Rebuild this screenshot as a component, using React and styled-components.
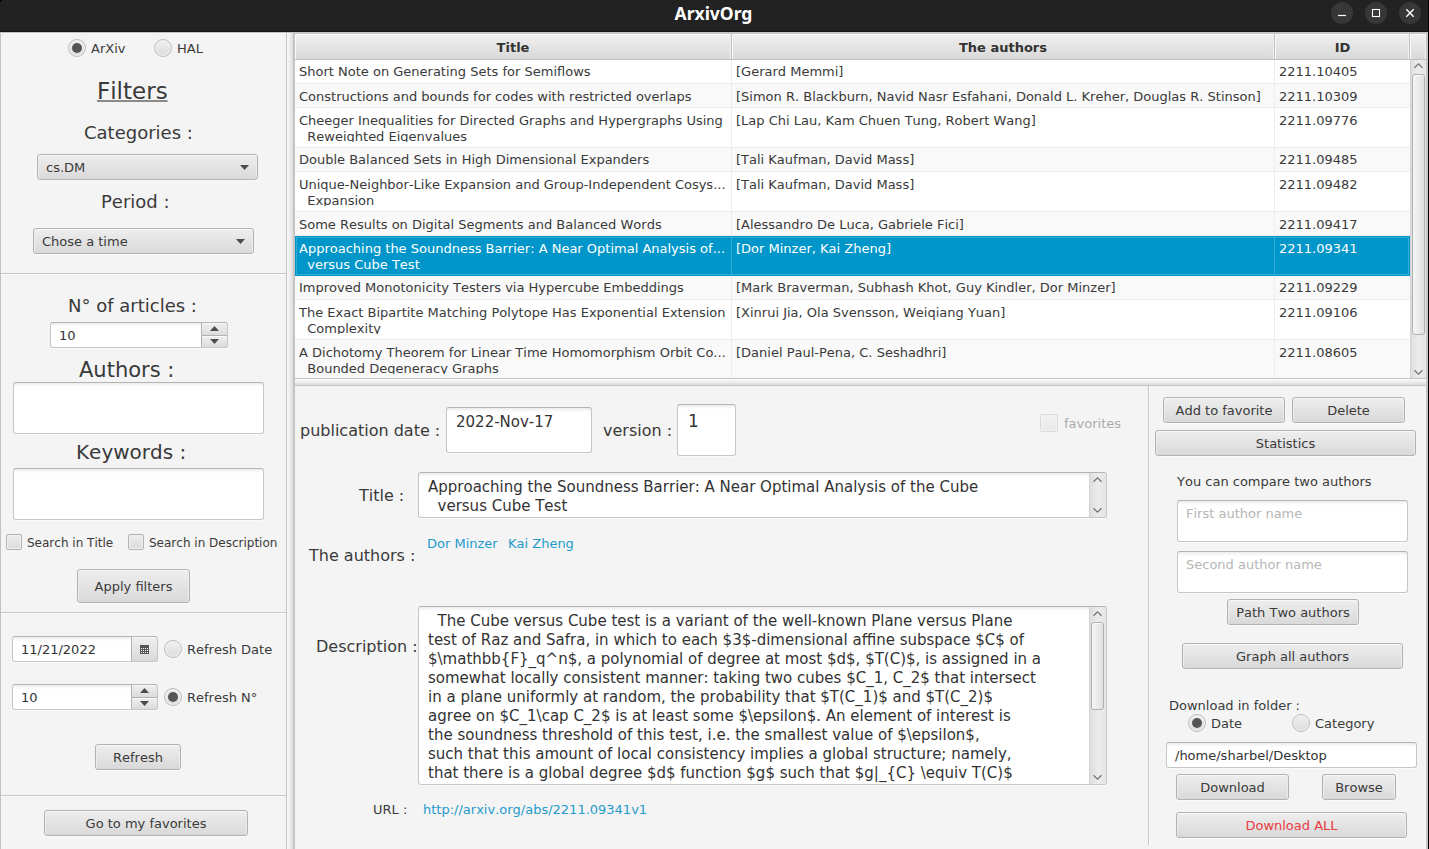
import React from "react";
import styled, { createGlobalStyle, css } from "styled-components";

const Global = createGlobalStyle`
  * { box-sizing: border-box; }
  html, body { margin: 0; padding: 0; background: #f4f4f4; }
  body {
    width: 1429px; height: 849px; overflow: hidden;
    font-family: "DejaVu Sans", sans-serif; font-size: 13px; line-height: 15px; color: #3a3a3a;
    font-kerning: none;
    white-space: pre;
  }
`;

const place = css`
  margin-top: ${(p) => p.$mt || 0}px;
  margin-left: ${(p) => p.$ml || 0}px;
  flex: none;
`;

/* ---------- window frame ---------- */
const Window = styled.div`
  width: 1429px; height: 849px;
  display: flex; flex-direction: column;
  background: #000;
`;
const TitleBar = styled.header`
  height: 32px; flex: none;
  display: flex; align-items: flex-start;
  background: #222;
  border-bottom: 1px solid #161616;
  border-right: 1px solid #000;
  border-top-left-radius: 4px;
`;
const WindowTitle = styled.h1`
  margin: 0 0 0 96px; flex: 1;
  text-align: center;
  font: bold 17.5px/27px "Noto Sans", sans-serif;
  color: #fff;
`;
const WindowButtons = styled.div`
  display: flex; gap: 12px; padding: 2px 7px 0 0;
`;
const RoundButton = styled.div`
  width: 22px; height: 22px; border-radius: 50%;
  background: #373737;
  svg { display: block; }
`;
const Body = styled.main`
  flex: 1; min-height: 0; display: flex;
  border-right: 1px solid #000;
  background: #f4f4f4;
`;

/* ---------- panels ---------- */
const FilterPanel = styled.aside`
  width: 287px; flex: none;
  display: flex; flex-direction: column;
  border: 1px solid #c2c2c2; border-bottom: 0;
`;
const Section = styled.section`
  height: ${(p) => p.$h}px; flex: none;
  display: flex; flex-direction: column; align-items: flex-start;
  border-top: ${(p) => (p.$first ? 0 : "1px solid #c8c8c8")};
  box-shadow: ${(p) => (p.$first ? "none" : "inset 0 1px 0 #fcfcfc")};
`;
const VerticalDivider = styled.div`
  width: 6px; flex: none;
  border-top: 1px solid #c2c2c2;
  background: linear-gradient(to right, #fbfbfb, #ececec 50%, #dcdcdc);
`;
const Content = styled.div`
  width: 1135px; flex: none;
  display: flex; flex-direction: column;
  border: 2px solid #c5c5c5; border-bottom: 0;
`;
const HorizontalDivider = styled.div`
  height: 8px; flex: none;
  border: solid #c5c5c5; border-width: 1px 0;
  background: linear-gradient(to bottom, #fbfbfb, #ececec 50%, #dcdcdc);
`;
const Lower = styled.div`
  flex: 1; min-height: 0; display: flex; align-items: flex-start;
`;
const Details = styled.section`
  width: 853px; flex: none;
  display: flex; flex-direction: column; align-items: flex-start;
`;
const Actions = styled.section`
  height: 459px; flex: 1;
  display: flex; flex-direction: column; align-items: flex-start;
  border-left: 1px solid #c6c6c6;
  box-shadow: inset 1px 0 0 #fcfcfc;
`;
const Row = styled.div`
  display: flex; align-items: flex-start;
  height: ${(p) => (p.$h ? p.$h + "px" : "auto")};
  ${place}
`;

/* ---------- texts ---------- */
const lineHeights = { 12: 14, 13: 15, 14: 16, 15: 18, 16: 19, 17: 20, 18: 21, 20: 24, 21: 24, 23: 26 };
const Label = styled.div`
  font-size: ${(p) => p.$size || 13}px;
  line-height: ${(p) => lineHeights[p.$size || 13]}px;
  letter-spacing: ${(p) => p.$ls || 0}px;
  width: ${(p) => (p.$w ? p.$w + "px" : "auto")};
  ${place}
`;
const Heading = styled(Label)`
  text-decoration: underline;
  text-decoration-thickness: 2px;
  text-decoration-color: #8a8a8a;
  text-underline-offset: 0.5px;
  text-decoration-skip-ink: none;
`;
const Link = styled(Label)`
  color: #1e9bcb;
`;

/* ---------- controls ---------- */
const face = css`
  border: 1px solid #b2b2b2;
  border-radius: 3px;
  background: linear-gradient(to bottom, #eeeeee, #d9d9d9);
  box-shadow: inset 0 1px 0 #f8f8f8, inset 1px 0 0 #ececec, inset -1px 0 0 #ececec, 0 1px 0 #fafafa;
`;
const Button = styled.div`
  ${face}
  width: ${(p) => p.$w}px; height: ${(p) => p.$h || 26}px;
  display: flex; align-items: center; justify-content: center;
  padding-top: 1px;
  color: ${(p) => (p.$danger ? "#ea3a3f" : "#3a3a3a")};
  ${place}
`;
const Combo = styled.div`
  ${face}
  width: 221px; height: 26px;
  display: flex; align-items: flex-start; justify-content: space-between;
  padding: 5px 8px 0 8px;
  ${place}
  svg { margin-top: 5px; }
`;
const Field = styled.div`
  width: ${(p) => p.$w}px; height: ${(p) => p.$h || 26}px;
  display: flex;
  border: 1px solid #c6c6c6; border-top-color: #b4b4b4; border-radius: 3px;
  background: linear-gradient(to bottom, #ececec 0, #fbfbfb 3px, #fff 5px);
  box-shadow: 0 1px 0 #fafafa;
  color: ${(p) => (p.$prompt ? "#b6b6b6" : "#333")};
  overflow: hidden;
  ${place}
`;
const FieldText = styled.div`
  flex: 1; min-width: 0;
  padding: ${(p) => (p.$top === undefined ? 5 : p.$top)}px 0 0 ${(p) => (p.$left === undefined ? 8 : p.$left)}px;
  font-size: ${(p) => p.$size || 13}px;
  line-height: ${(p) => p.$lh || 15}px;
`;
const Stepper = styled.div`
  width: 27px; margin: -1px -1px -1px 0; flex: none;
  display: flex; flex-direction: column;
`;
const Step = styled.div`
  flex: 1;
  display: flex; align-items: center; justify-content: center;
  border: 1px solid #b2b2b2;
  border-top-width: ${(p) => (p.$down ? 0 : 1)}px;
  border-radius: ${(p) => (p.$down ? "0 0 3px 0" : "0 3px 0 0")};
  background: linear-gradient(to bottom, #efefef, #dcdcdc);
  box-shadow: inset 0 1px 0 #f8f8f8;
`;
const DateButton = styled.div`
  width: 27px; margin: -1px -1px -1px 0; flex: none;
  display: flex; align-items: center; justify-content: center;
  border: 1px solid #b2b2b2; border-radius: 0 3px 3px 0;
  background: linear-gradient(to bottom, #efefef, #dadada);
  box-shadow: inset 0 1px 0 #f8f8f8;
`;
const Choice = styled.div`
  display: flex; align-items: flex-start;
  gap: ${(p) => (p.$gap === undefined ? 5 : p.$gap)}px;
  opacity: ${(p) => (p.$disabled ? 0.4 : 1)};
  ${place}
`;
const Dot = styled.span`
  width: 18px; height: 18px; flex: none;
  display: flex; align-items: center; justify-content: center;
  border: 1px solid #bcbcbc; border-radius: 50%;
  background: linear-gradient(to bottom, #f0f0f0, #dcdcdc);
  box-shadow: inset 0 0 0 1px #f3f3f3;
  &::after {
    content: ""; width: 10px; height: 10px; border-radius: 50%;
    background: ${(p) => (p.$on ? "#555" : "transparent")};
  }
`;
const Box = styled.span`
  width: ${(p) => p.$s}px; height: ${(p) => p.$s}px; flex: none;
  border: 1px solid #b4b4b4; border-radius: 2px;
  background: linear-gradient(to bottom, #eeeeee, #dadada);
  box-shadow: inset 0 0 0 1px #f0f0f0;
`;

/* ---------- scroll bars ---------- */
const Track = styled.div`
  width: ${(p) => p.$w}px; flex: none;
  display: flex; flex-direction: column; align-items: center;
  border-left: 1px solid #d4d4d4;
  background: linear-gradient(to right, #dedede, #ececec 50%, #e4e4e4);
  padding: ${(p) => p.$pt}px ${(p) => p.$pr || 0}px ${(p) => p.$pb}px 0;
`;
const Thumb = styled.div`
  width: 13px; height: ${(p) => p.$h}px;
  margin: 5px 0 auto;
  border: 1px solid #b0b0b0; border-radius: 3px;
  background: linear-gradient(to right, #f6f6f6, #e0e0e0);
  box-shadow: inset 0 1px 0 #fbfbfb;
`;
const Spacer = styled.div`flex: 1;`;

/* ---------- table ---------- */
const Table = styled.div`
  height: 344px; flex: none;
  display: flex; flex-direction: column;
  background: #fff;
`;
const HeadRow = styled.div`
  height: 26px; flex: none; display: flex;
  border-bottom: 1px solid #c0c0c0;
  background: linear-gradient(to bottom, #f0f0f0, #d9d9d9);
`;
const columns = { title: 437, authors: 543, id: 135 };
const HeadCell = styled.div`
  width: ${(p) => (p.$col ? columns[p.$col] + "px" : "16px")};
  padding: 6px 0 0 ${(p) => (p.$col === "id" ? 1 : 0)}px; text-align: center; font-weight: bold; color: #333;
  border-right: ${(p) => (p.$col ? "1px solid #c0c0c0" : 0)};
  box-shadow: inset 1px 1px 0 #fafafa, inset -1px 0 0 #efefef;
`;
const TableBody = styled.div`flex: 1; min-height: 0; display: flex;`;
const Rows = styled.div`width: 1115px; overflow: hidden;`;
const TableRow = styled.div`
  height: ${(p) => (p.$tall ? 40 : 24)}px;
  display: flex;
  background: ${(p) => (p.$sel ? "#0096c9" : p.$odd ? "#f9f9f9" : "#fff")};
  color: ${(p) => (p.$sel ? "#fff" : "#3a3a3a")};
  box-shadow: ${(p) => (p.$sel ? "inset 0 0 0 1px #0096c9, inset 0 0 0 2px #33abd4" : "inset 0 -1px 0 #ededed")};
  --line: ${(p) => (p.$sel ? "#33abd4" : "#ededed")};
`;
const Cell = styled.div`
  width: ${(p) => columns[p.$col]}px;
  padding: ${(p) => p.$top}px 0 0 4px;
  border-right: ${(p) => (p.$col === "id" ? 0 : "1px solid var(--line)")};
`;
const CellText = styled.div`
  line-height: 16px; max-height: 29px; overflow: hidden;
`;

const Up = () => (
  <svg width="9" height="5" viewBox="0 0 9 5"><path d="M0 5 4.5 0 9 5z" fill="#4c4c4c" /></svg>
);
const Down = () => (
  <svg width="9" height="5" viewBox="0 0 9 5"><path d="M0 0 4.5 5 9 0z" fill="#4c4c4c" /></svg>
);
const Chevron = ({ down }) => (
  <svg width="11" height="7" viewBox="0 0 11 7">
    <path d={down ? "M1.5 1.2 5.5 5.2 9.5 1.2" : "M1.5 5.8 5.5 1.8 9.5 5.8"} fill="none" stroke="#747474" strokeWidth="1.3" />
  </svg>
);
const Calendar = () => (
  <svg width="9" height="9" viewBox="0 0 9 9">
    <rect width="9" height="9" fill="#555" />
    {[3, 5, 7].map((y) => [1, 3, 5, 7].map((x) => <rect key={x + "-" + y} x={x} y={y} width="1" height="1" fill="#fff" />))}
  </svg>
);

const Spinner = (p) => (
  <Field {...p}>
    <FieldText>10</FieldText>
    <Stepper>
      <Step><Up /></Step>
      <Step $down><Down /></Step>
    </Stepper>
  </Field>
);
const Radio = ({ on, w, children, ...p }) => (
  <Choice {...p}><Dot $on={on} /><Label $mt={2} $w={w}>{children}</Label></Choice>
);

const articles = [
  [["Short Note on Generating Sets for Semiflows"], "[Gerard Memmi]", "2211.10405", 0],
  [["Constructions and bounds for codes with restricted overlaps"], "[Simon R. Blackburn, Navid Nasr Esfahani, Donald L. Kreher, Douglas R. Stinson]", "2211.10309", 1],
  [["Cheeger Inequalities for Directed Graphs and Hypergraphs Using", "  Reweighted Eigenvalues"], "[Lap Chi Lau, Kam Chuen Tung, Robert Wang]", "2211.09776", 1],
  [["Double Balanced Sets in High Dimensional Expanders"], "[Tali Kaufman, David Mass]", "2211.09485", 0],
  [["Unique-Neighbor-Like Expansion and Group-Independent Cosys...", "  Expansion"], "[Tali Kaufman, David Mass]", "2211.09482", 1],
  [["Some Results on Digital Segments and Balanced Words"], "[Alessandro De Luca, Gabriele Fici]", "2211.09417", 1],
  [["Approaching the Soundness Barrier: A Near Optimal Analysis of...", "  versus Cube Test"], "[Dor Minzer, Kai Zheng]", "2211.09341", 1],
  [["Improved Monotonicity Testers via Hypercube Embeddings"], "[Mark Braverman, Subhash Khot, Guy Kindler, Dor Minzer]", "2211.09229", 0],
  [["The Exact Bipartite Matching Polytope Has Exponential Extension", "  Complexity"], "[Xinrui Jia, Ola Svensson, Weiqiang Yuan]", "2211.09106", 1],
  [["A Dichotomy Theorem for Linear Time Homomorphism Orbit Co...", "  Bounded Degeneracy Graphs"], "[Daniel Paul-Pena, C. Seshadhri]", "2211.08605", 1],
];

const description = [
  "  The Cube versus Cube test is a variant of the well-known Plane versus Plane",
  "test of Raz and Safra, in which to each $3$-dimensional affine subspace $C$ of",
  "$\\mathbb{F}_q^n$, a polynomial of degree at most $d$, $T(C)$, is assigned in a",
  "somewhat locally consistent manner: taking two cubes $C_1, C_2$ that intersect",
  "in a plane uniformly at random, the probability that $T(C_1)$ and $T(C_2)$",
  "agree on $C_1\\cap C_2$ is at least some $\\epsilon$. An element of interest is",
  "the soundness threshold of this test, i.e. the smallest value of $\\epsilon$,",
  "such that this amount of local consistency implies a global structure; namely,",
  "that there is a global degree $d$ function $g$ such that $g|_{C} \\equiv T(C)$",
];

export default function App() {
  return (
    <Window>
      <Global />
      <TitleBar>
        <WindowTitle>ArxivOrg</WindowTitle>
        <WindowButtons>
          <RoundButton><svg width="22" height="22"><path d="M7 13.5h8" stroke="#fff" strokeWidth="1.2" /></svg></RoundButton>
          <RoundButton><svg width="22" height="22"><rect x="7.5" y="7.5" width="7" height="7" fill="none" stroke="#fff" strokeWidth="1.1" /></svg></RoundButton>
          <RoundButton><svg width="22" height="22"><path d="M7.3 7.3 14.7 14.7M14.7 7.3 7.3 14.7" stroke="#fff" strokeWidth="1.4" /></svg></RoundButton>
        </WindowButtons>
      </TitleBar>
      <Body>
        <FilterPanel>
          <Section $h={240} $first>
            <Row $mt={6} $ml={67} $h={18}>
              <Radio on w={36}>ArXiv</Radio>
              <Radio $ml={27}>HAL</Radio>
            </Row>
            <Heading $size={23} $mt={21} $ml={96}>Filters</Heading>
            <Label $size={18} $mt={18} $ml={83}>Categories :</Label>
            <Combo $mt={11} $ml={36}>cs.DM<Down /></Combo>
            <Label $size={18} $mt={11} $ml={100}>Period :</Label>
            <Combo $mt={16} $ml={32}>Chose a time<Down /></Combo>
          </Section>
          <Section $h={339}>
            <Label $size={18} $mt={21} $ml={67}>N° of articles :</Label>
            <Spinner $w={178} $mt={6} $ml={49} />
            <Label $size={21} $mt={10} $ml={78}>Authors :</Label>
            <Field $w={251} $h={52} $ml={12} />
            <Label $size={20} $mt={6} $ml={75}>Keywords :</Label>
            <Field $w={251} $h={52} $mt={4} $ml={12} />
            <Row $mt={14} $ml={5} $h={16}>
              <Choice><Box $s={16} /><Label $size={12} $mt={2} $w={101}>Search in Title</Label></Choice>
              <Choice><Box $s={16} /><Label $size={12} $mt={2}>Search in Description</Label></Choice>
            </Row>
            <Button $w={113} $h={34} $mt={19} $ml={76}>Apply filters</Button>
          </Section>
          <Section $h={183}>
            <Row $mt={23} $ml={11} $h={26}>
              <Field $w={146}><FieldText>11/21/2022</FieldText><DateButton><Calendar /></DateButton></Field>
              <Radio $mt={4} $ml={6}>Refresh Date</Radio>
            </Row>
            <Row $mt={22} $ml={11} $h={26}>
              <Spinner $w={146} />
              <Radio on $mt={4} $ml={6}>Refresh N°</Radio>
            </Row>
            <Button $w={86} $mt={34} $ml={94}>Refresh</Button>
          </Section>
          <Section $h={54}>
            <Button $w={204} $mt={14} $ml={43}>Go to my favorites</Button>
          </Section>
        </FilterPanel>
        <VerticalDivider />
        <Content>
          <Table>
            <HeadRow>
              <HeadCell $col="title">Title</HeadCell>
              <HeadCell $col="authors">The authors</HeadCell>
              <HeadCell $col="id">ID</HeadCell>
              <HeadCell />
            </HeadRow>
            <TableBody>
              <Rows>
                {articles.map(([title, authors, id, low], i) => (
                  <TableRow key={id} $tall={title.length > 1} $odd={i % 2 === 1} $sel={i === 6}>
                    <Cell $col="title" $top={4 + low}><CellText>{title.join("\n")}</CellText></Cell>
                    <Cell $col="authors" $top={4 + low}><CellText>{authors}</CellText></Cell>
                    <Cell $col="id" $top={4 + low}><CellText>{id}</CellText></Cell>
                  </TableRow>
                ))}
              </Rows>
              <Track $w={16} $pt={2} $pb={2}>
                <Chevron /><Thumb $h={261} /><Chevron down />
              </Track>
            </TableBody>
          </Table>
          <HorizontalDivider />
          <Lower>
            <Details>
              <Row $mt={18} $ml={5} $h={52}>
                <Label $size={16} $mt={17} $w={146}>publication date :</Label>
                <Field $w={146} $h={46} $mt={3}><FieldText $size={15} $lh={18} $top={5} $left={9}>2022-Nov-17</FieldText></Field>
                <Label $size={16} $mt={17} $ml={11} $w={74}>version :</Label>
                <Field $w={59} $h={52}><FieldText $size={17} $lh={20} $top={6} $left={10}>1</FieldText></Field>
                <Choice $disabled $gap={6} $mt={10} $ml={304}><Box $s={18} /><Label $mt={2}>favorites</Label></Choice>
              </Row>
              <Row $mt={16} $h={46}>
                <Label $size={16} $mt={14} $ml={64} $w={59}>Title :</Label>
                <Field $w={689} $h={46}>
                  <FieldText $size={15} $lh={19} $top={5} $left={9}>{"Approaching the Soundness Barrier: A Near Optimal Analysis of the Cube\n  versus Cube Test"}</FieldText>
                  <Track $w={17} $pt={3} $pb={3} $pr={1}><Chevron /><Spacer /><Chevron down /></Track>
                </Field>
              </Row>
              <Row $mt={18} $h={70}>
                <Label $size={16} $mt={10} $ml={14} $w={118}>The authors :</Label>
                <Link $w={81}>Dor Minzer</Link>
                <Link>Kai Zheng</Link>
              </Row>
              <Row $h={179}>
                <Label $size={16} $mt={31} $ml={21} $w={102}>Description :</Label>
                <Field $w={689} $h={179}>
                  <FieldText $size={15} $lh={19} $top={5} $left={9}>{description.join("\n")}</FieldText>
                  <Track $w={17} $pt={3} $pb={3} $pr={1}><Chevron /><Thumb $h={88} /><Chevron down /></Track>
                </Field>
              </Row>
              <Row $mt={17} $ml={78}>
                <Label $w={50}>URL :</Label>
                <Link>http://arxiv.org/abs/2211.09341v1</Link>
              </Row>
            </Details>
            <Actions>
              <Row $mt={11} $ml={14}>
                <Button $w={122}>Add to favorite</Button>
                <Button $w={113} $ml={7}>Delete</Button>
              </Row>
              <Button $w={261} $mt={7} $ml={6}>Statistics</Button>
              <Label $mt={18} $ml={28}>You can compare two authors</Label>
              <Field $w={231} $h={42} $mt={11} $ml={28} $prompt><FieldText>First author name</FieldText></Field>
              <Field $w={231} $h={42} $mt={9} $ml={28} $prompt><FieldText>Second author name</FieldText></Field>
              <Button $w={132} $mt={6} $ml={78}>Path Two authors</Button>
              <Button $w={221} $mt={18} $ml={33}>Graph all authors</Button>
              <Label $mt={29} $ml={20}>Download in folder :</Label>
              <Row $mt={1} $ml={39} $h={18}>
                <Radio on w={32}>Date</Radio>
                <Radio $ml={49}>Category</Radio>
              </Row>
              <Field $w={251} $mt={10} $ml={17}><FieldText>/home/sharbel/Desktop</FieldText></Field>
              <Row $mt={6} $ml={27}>
                <Button $w={113}>Download</Button>
                <Button $w={74} $ml={33}>Browse</Button>
              </Row>
              <Button $w={231} $mt={12} $ml={27} $danger>Download ALL</Button>
            </Actions>
          </Lower>
        </Content>
      </Body>
    </Window>
  );
}
